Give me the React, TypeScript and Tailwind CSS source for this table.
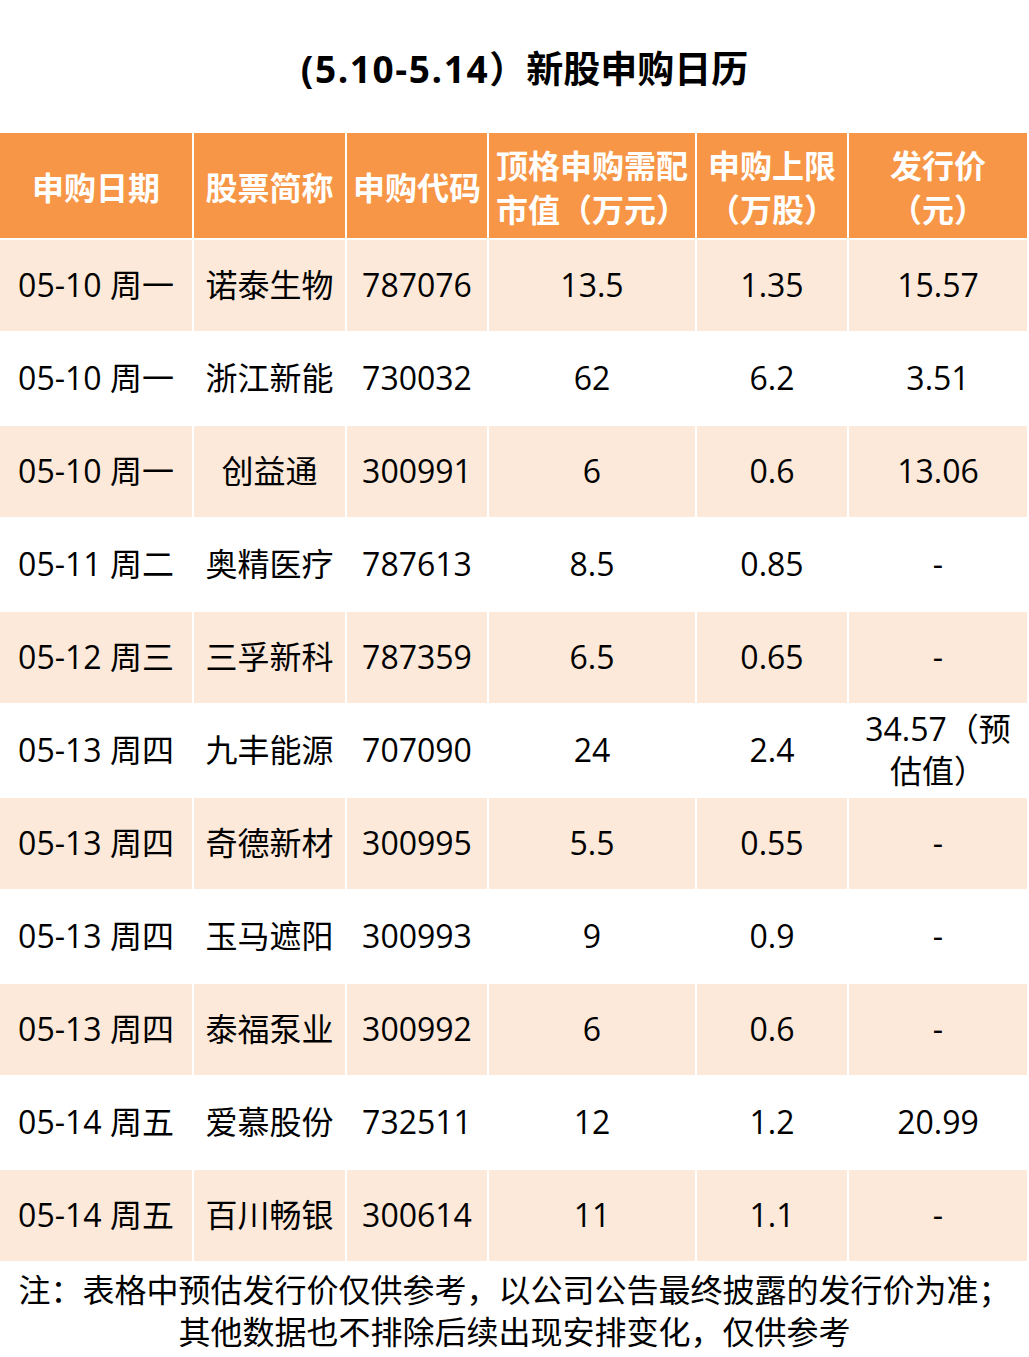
import React from "react";

const headers = ["申购日期", "股票简称", "申购代码", "顶格申购需配市值（万元）", "申购上限（万股）", "发行价（元）"];

const rows: string[][] = [
  ["05-10 周一", "诺泰生物", "787076", "13.5", "1.35", "15.57"],
  ["05-10 周一", "浙江新能", "730032", "62", "6.2", "3.51"],
  ["05-10 周一", "创益通", "300991", "6", "0.6", "13.06"],
  ["05-11 周二", "奥精医疗", "787613", "8.5", "0.85", "-"],
  ["05-12 周三", "三孚新科", "787359", "6.5", "0.65", "-"],
  ["05-13 周四", "九丰能源", "707090", "24", "2.4", "34.57（预估值）"],
  ["05-13 周四", "奇德新材", "300995", "5.5", "0.55", "-"],
  ["05-13 周四", "玉马遮阳", "300993", "9", "0.9", "-"],
  ["05-13 周四", "泰福泵业", "300992", "6", "0.6", "-"],
  ["05-14 周五", "爱慕股份", "732511", "12", "1.2", "20.99"],
  ["05-14 周五", "百川畅银", "300614", "11", "1.1", "-"],
];

export default function App() {
  return (
    <div className="w-[1029px] h-[1357px] bg-white text-black font-['Open_Sans','Noto_Sans_CJK_SC',sans-serif]">
      <div className="h-[133px] flex items-center justify-center pt-[3px] pl-[20px]">
        <h1 className="text-[37px] font-bold leading-none">
          <span className="tracking-[1.6px]">(5.10-5.14</span>）新股申购日历
        </h1>
      </div>

      <div className="grid grid-cols-[192px_151px_140px_206px_150px_178px] gap-[2px]">
        {headers.map((h) => (
          <div
            key={h}
            className="h-[105px] bg-[#f79646] text-white font-bold text-[32px] leading-[44px] flex items-center justify-center text-center px-[6px] pt-[4px]"
          >
            {h}
          </div>
        ))}
        {rows.map((r, i) =>
          r.map((c, j) => (
            <div
              key={i + "-" + j}
              className={
                "h-[91px] text-[32px] leading-[42px] flex items-center justify-center text-center px-[6px] pb-[1px] " +
                (i % 2 === 0 ? "bg-[#fde9d9]" : "bg-white")
              }
            >
              {c}
            </div>
          ))
        )}
      </div>

      <div className="pt-[8px] text-center text-[32px] leading-[42px]">
        <p>注：表格中预估发行价仅供参考，以公司公告最终披露的发行价为准；</p>
        <p>其他数据也不排除后续出现安排变化，仅供参考</p>
      </div>
    </div>
  );
}
